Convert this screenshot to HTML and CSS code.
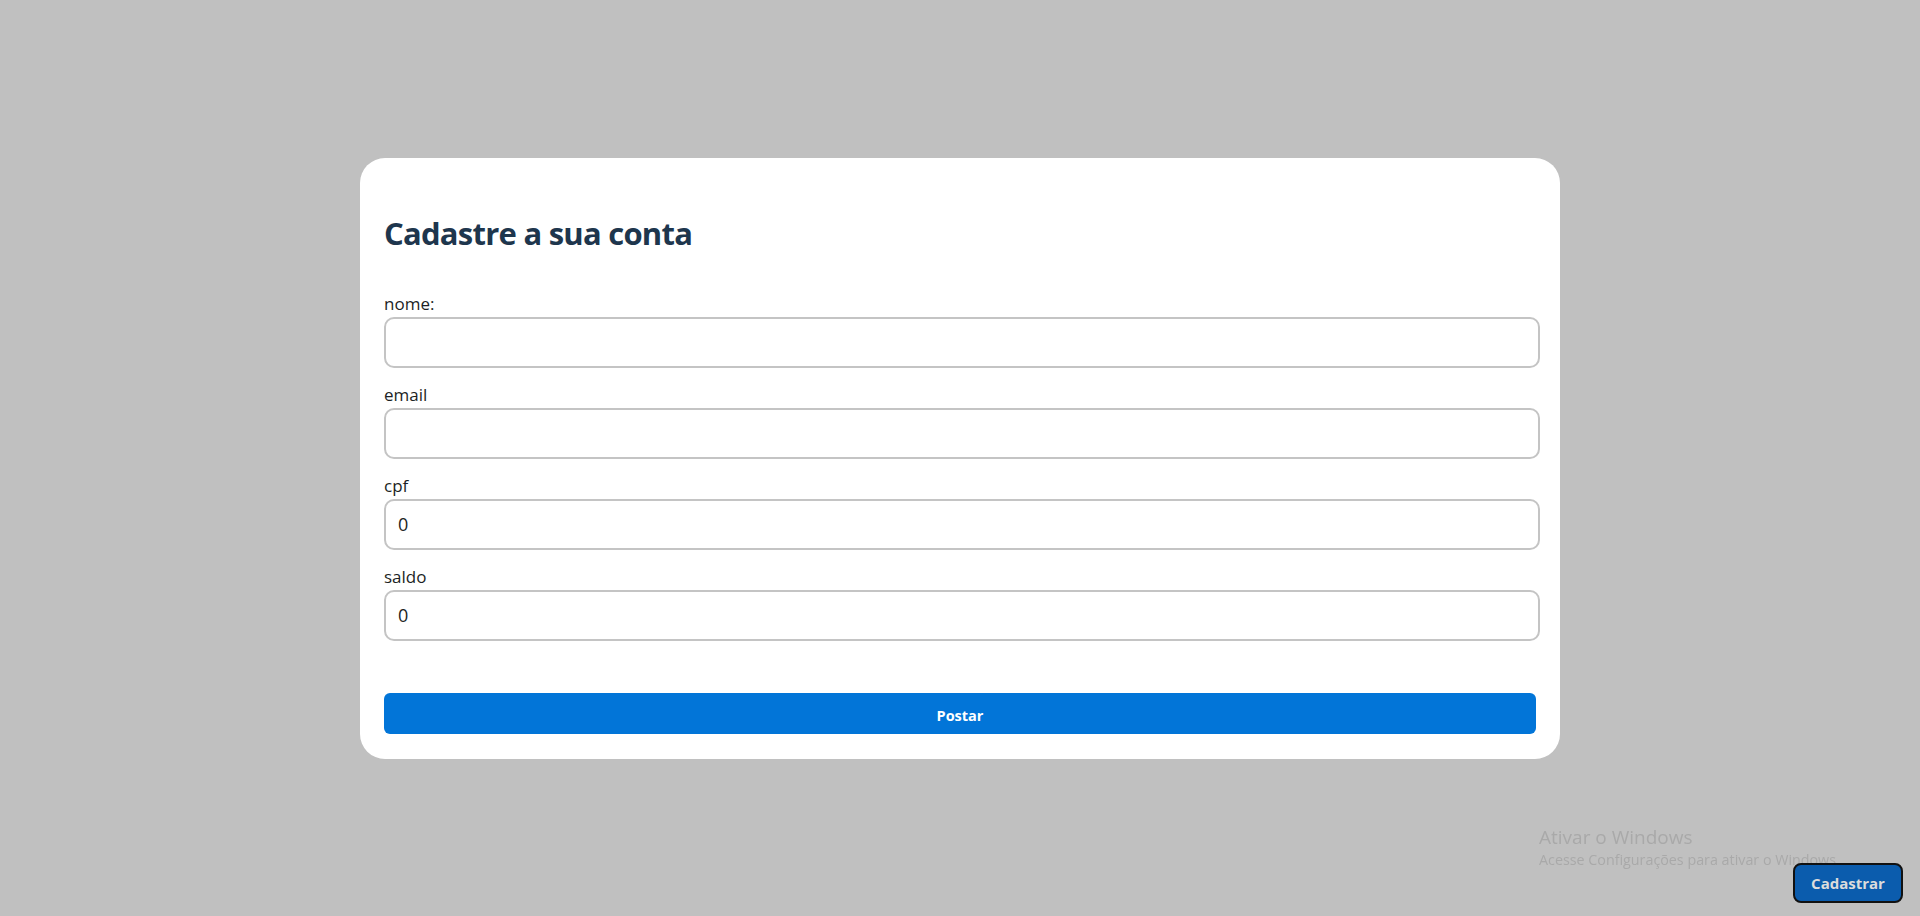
FILE: index.html
```html
<!DOCTYPE html>
<html lang="pt-BR">
<head>
<meta charset="utf-8">
<title>Cadastre a sua conta</title>
<link rel="stylesheet" href="styles.css">
</head>
<body>
  <main class="overlay">
    <section class="card">
      <h1 class="card-title">Cadastre a sua conta</h1>
      <form class="form">
        <div class="field">
          <label class="field-label" for="nome">nome:</label>
          <input class="field-input" id="nome" type="text">
        </div>
        <div class="field">
          <label class="field-label" for="email">email</label>
          <input class="field-input" id="email" type="email">
        </div>
        <div class="field">
          <label class="field-label" for="cpf">cpf</label>
          <input class="field-input" id="cpf" type="text" value="0">
        </div>
        <div class="field">
          <label class="field-label" for="saldo">saldo</label>
          <input class="field-input" id="saldo" type="text" value="0">
        </div>
        <button class="submit" type="button">Postar</button>
      </form>
    </section>
  </main>

  <div class="watermark">
    <div class="watermark-title">Ativar o Windows</div>
    <div class="watermark-sub">Acesse Configurações para ativar o Windows.</div>
  </div>

  <button class="fab" type="button">Cadastrar</button>
</body>
</html>
```

FILE: styles.css
```css
* {
  box-sizing: border-box;
}

html, body {
  margin: 0;
  padding: 0;
}

body {
  background: #c0c0c0;
  font-family: "Open Sans", "Noto Sans", sans-serif;
  height: 100vh;
  overflow: hidden;
}

.overlay {
  height: 100vh;
  display: flex;
  align-items: center;
  justify-content: center;
}

.card {
  width: 1200px;
  background: #ffffff;
  border-radius: 25px;
  padding: 24px 24px 25px;
}

.card-title {
  margin: 31px 0 39px;
  font-size: 31px;
  line-height: 40px;
  font-weight: 700;
  color: #1e364d;
  letter-spacing: -0.75px;
}

.form {
  display: flex;
  flex-direction: column;
  gap: 15px;
  margin: 0;
}

.field {
  display: flex;
  flex-direction: column;
}

.field-label {
  display: block;
  height: 25px;
  font-size: 17px;
  line-height: 24px;
  color: #1c1f24;
}

.field-input {
  width: calc(100% + 4px);
  height: 51px;
  border: 2px solid #c4c4c4;
  border-radius: 10px;
  padding: 0 12px;
  font-family: "Open Sans", "Noto Sans", sans-serif;
  font-size: 18px;
  color: #1c1f24;
  background: #ffffff;
  outline: none;
}

.submit {
  margin-top: 37px;
  height: 41px;
  width: 100%;
  border: none;
  border-radius: 6px;
  background: #0275d8;
  color: #ffffff;
  font-family: "Open Sans", "Noto Sans", sans-serif;
  font-size: 14.5px;
  font-weight: 700;
  padding: 5px 0 0;
  cursor: pointer;
}

.watermark {
  position: fixed;
  left: 1539px;
  top: 825px;
  color: #a9a9a9;
  white-space: nowrap;
  z-index: 1;
}

.watermark-title {
  font-size: 19px;
  line-height: 25px;
}

.watermark-sub {
  font-size: 14.3px;
  line-height: 20px;
}

.fab {
  position: fixed;
  right: 17px;
  bottom: 13px;
  width: 110px;
  height: 40px;
  background: #0b5cad;
  border: 2px solid #111111;
  border-radius: 8px;
  color: #dcdcdc;
  font-family: "Open Sans", "Noto Sans", sans-serif;
  font-size: 15px;
  font-weight: 700;
  padding: 0;
  z-index: 2;
  cursor: pointer;
}
```
